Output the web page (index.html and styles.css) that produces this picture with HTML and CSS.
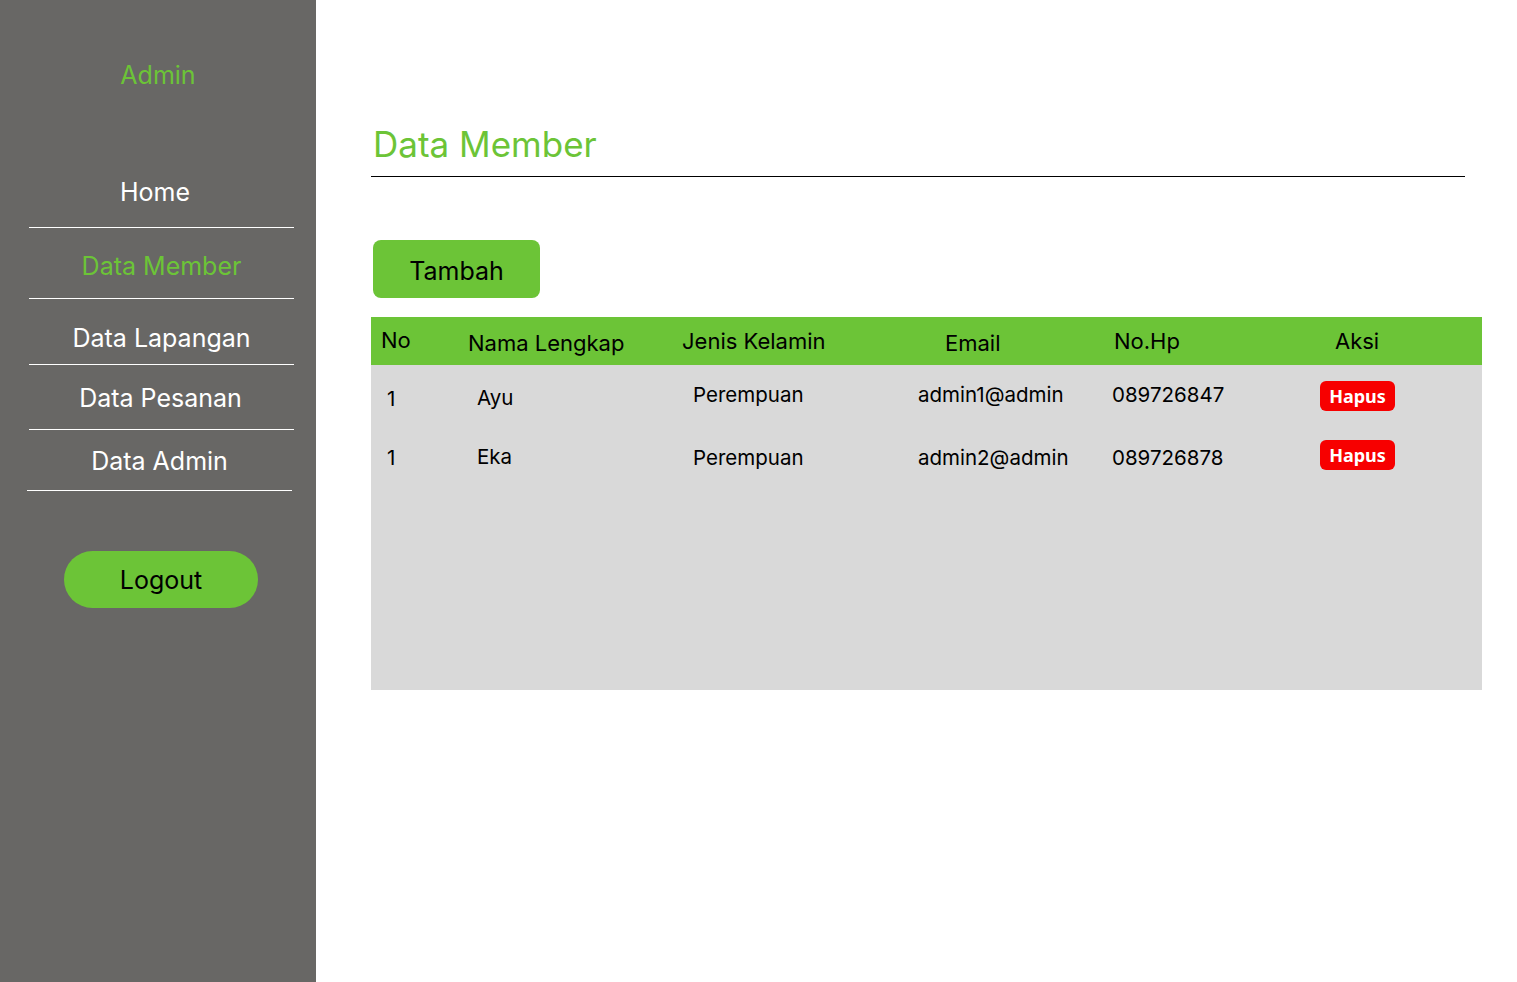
FILE: index.html
```html
<!DOCTYPE html>
<html lang="id">
<head>
<meta charset="utf-8">
<title>Data Member</title>
<link rel="stylesheet" href="styles.css">
</head>
<body>
<div class="app">
  <aside class="sidebar">
    <div class="brand">Admin</div>
    <nav class="nav">
      <a class="nav-item nav-item--home">Home</a>
      <a class="nav-item nav-item--active">Data Member</a>
      <a class="nav-item nav-item--lapangan">Data Lapangan</a>
      <a class="nav-item nav-item--pesanan">Data Pesanan</a>
      <a class="nav-item nav-item--admin">Data Admin</a>
    </nav>
    <button class="logout">Logout</button>
  </aside>
  <main class="content">
    <h1 class="title">Data Member</h1>
    <button class="btn-add">Tambah</button>
    <div class="table">
      <div class="thead">
        <div class="th th-no">No</div>
        <div class="th th-nama">Nama Lengkap</div>
        <div class="th th-jk">Jenis Kelamin</div>
        <div class="th th-email">Email</div>
        <div class="th th-hp">No.Hp</div>
        <div class="th th-aksi">Aksi</div>
      </div>
      <div class="tbody">
        <div class="row row--first">
          <div class="td td-no">1</div>
          <div class="td td-nama">Ayu</div>
          <div class="td td-jk">Perempuan</div>
          <div class="td td-email">admin1@admin</div>
          <div class="td td-hp">089726847</div>
          <div class="td td-aksi"><span class="btn-del">Hapus</span></div>
        </div>
        <div class="row row--second">
          <div class="td td-no">1</div>
          <div class="td td-nama">Eka</div>
          <div class="td td-jk">Perempuan</div>
          <div class="td td-email">admin2@admin</div>
          <div class="td td-hp">089726878</div>
          <div class="td td-aksi"><span class="btn-del">Hapus</span></div>
        </div>
      </div>
    </div>
  </main>
</div>
</body>
</html>
```
FILE: styles.css
```css
* { box-sizing: border-box; }
html, body { margin: 0; padding: 0; }
body {
  font-family: Inter, "Noto Sans", sans-serif;
  background: #ffffff;
  color: #000;
}
.app {
  display: flex;
  min-height: 982px;
}
.sidebar {
  width: 316px;
  flex: 0 0 316px;
  background: #686765;
  display: flex;
  flex-direction: column;
  padding-top: 60px;
}
.brand {
  color: #6cc437;
  font-size: 25px;
  line-height: 30px;
  text-align: center;
}
.nav {
  display: flex;
  flex-direction: column;
  margin: 87px 22px 0 29px;
}
.nav-item {
  display: block;
  color: #fff;
  font-size: 25px;
  line-height: 30px;
  text-align: center;
  border-bottom: 1px solid #fff;
  text-decoration: none;
}
.nav-item--home { padding: 0 13px 20px 0; }
.nav-item--active { color: #6cc437; padding: 23px 0 17px 0; }
.nav-item--lapangan { padding: 24px 0 11px 0; }
.nav-item--pesanan { padding: 18px 2px 16px 0; }
.nav-item--admin { padding: 16px 0 14px 0; margin: 0 2px 0 -2px; }
.logout {
  margin: 60px 0 0 64px;
  width: 194px;
  height: 57px;
  border: none;
  border-radius: 29px;
  background: #6cc437;
  color: #000;
  font-family: Inter, sans-serif;
  font-size: 25px;
  padding: 1px 0 0 0;
}
.content {
  flex: 1;
  padding: 124px 0 0 55px;
  display: flex;
  flex-direction: column;
  align-items: flex-start;
}
.title {
  margin: 0;
  width: 1094px;
  color: #6cc437;
  font-size: 35px;
  font-weight: 400;
  line-height: 40px;
  padding: 0 0 12px 2px;
  border-bottom: 1px solid #000;
}
.btn-add {
  margin: 63px 0 0 2px;
  width: 167px;
  height: 58px;
  border: none;
  border-radius: 8px;
  background: #6cc437;
  color: #000;
  font-family: Inter, sans-serif;
  font-size: 25px;
  padding: 3px 0 0 0;
}
.table {
  margin-top: 19px;
  width: 1111px;
}
.thead, .row {
  display: grid;
  grid-template-columns: 89px 215px 230px 195px 190px 192px;
  align-items: start;
}
.thead {
  background: #6cc437;
  height: 48px;
}
.tbody {
  background: #d9d9d9;
  height: 325px;
}
.th, .td {
  font-size: 20.5px;
  line-height: 24px;
  white-space: nowrap;
}
.th { font-size: 22px; padding-top: 12px; }
.th-no { padding: 11px 0 0 10px; }
.th-nama { padding: 14px 0 0 8px; }
.th-jk { padding-left: 7px; }
.th-email { padding: 14px 0 0 40px; }
.th-hp { padding-left: 14px; }
.th-aksi { padding-left: 45px; }
.row { height: 61px; }
.td-no { padding-left: 16px; }
.td-nama { padding-left: 17px; }
.td-jk { padding-left: 18px; }
.td-email { padding-left: 13px; }
.td-hp { padding-left: 12px; }
.td-aksi { padding-left: 30px; }
.row--first .td { padding-top: 18px; }
.row--first .td-no { padding-top: 22px; }
.row--first .td-nama { padding-top: 21px; }
.row--first .td-aksi { padding-top: 16px; }
.row--second .td { padding-top: 20px; }
.row--second .td-nama { padding-top: 19px; }
.row--second .td-aksi { padding-top: 14px; }
.btn-del {
  display: inline-flex;
  align-items: center;
  justify-content: center;
  width: 75px;
  height: 30px;
  border-radius: 6px;
  background: #f70000;
  color: #fff;
  font-family: "Noto Sans", sans-serif;
  font-weight: 700;
  font-size: 18px;
  line-height: 1;
}
```
